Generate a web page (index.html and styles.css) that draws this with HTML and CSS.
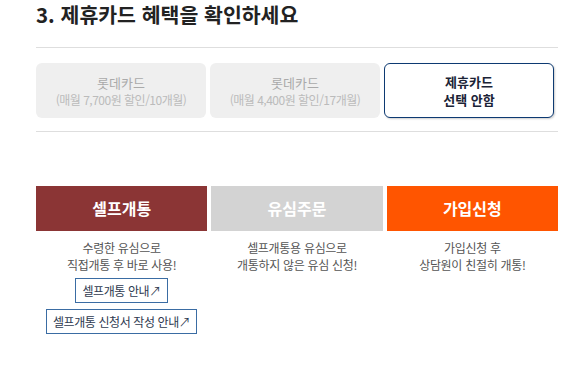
FILE: index.html
```html
<!DOCTYPE html>
<html lang="ko">
<head>
	<meta charset="UTF-8">
	<title>제휴카드</title>
	<link rel="stylesheet" href="styles.css">
</head>
<body>
	<div id="wrap">
		<h3 class="sec-title">3. 제휴카드 혜택을 확인하세요</h3>
		<div class="card-list">
			<div class="card-cell">
				<div class="card">
					<p class="card-name">롯데카드</p>
					<p class="card-desc">(매월 7,700원 할인/10개월)</p>
				</div>
			</div>
			<div class="card-cell">
				<div class="card">
					<p class="card-name">롯데카드</p>
					<p class="card-desc">(매월 4,400원 할인/17개월)</p>
				</div>
			</div>
			<div class="card-cell">
				<div class="card on">
					<p class="card-name">제휴카드</p>
					<p class="card-name">선택 안함</p>
				</div>
			</div>
		</div>
		<div class="join-list">
			<div class="join-col">
				<div class="join-btn self">셀프개통</div>
				<p class="join-txt">수령한 유심으로<br>직접개통 후 바로 사용!</p>
				<a class="guide-link" href="#">셀프개통 안내↗</a>
				<a class="guide-link" href="#">셀프개통 신청서 작성 안내↗</a>
			</div>
			<div class="join-col">
				<div class="join-btn usim">유심주문</div>
				<p class="join-txt">셀프개통용 유심으로<br>개통하지 않은 유심 신청!</p>
			</div>
			<div class="join-col">
				<div class="join-btn apply">가입신청</div>
				<p class="join-txt">가입신청 후<br>상담원이 친절히 개통!</p>
			</div>
		</div>
	</div>
</body>
</html>
```

FILE: styles.css
```css
body {
	margin: 0;
	background-color: #fff;
	font-family: "Noto Sans CJK KR", "Noto Sans", sans-serif;
	color: #333;
}
p {
	margin: 0;
}
#wrap {
	width: 522px;
	margin-left: 36px;
}
.sec-title {
	margin: 0;
	height: 47px;
	font-size: 20.5px;
	line-height: 28px;
	font-weight: bold;
	color: #222;
	border-bottom: 1px solid #dedede;
}
.card-list {
	display: flex;
	padding: 15px 0 13px 0;
	border-bottom: 1px solid #dedede;
}
.card-cell {
	flex: 1;
	padding-right: 4px;
}
.card {
	height: 55px;
	box-sizing: border-box;
	display: flex;
	flex-direction: column;
	justify-content: center;
	text-align: center;
	border-radius: 6px;
	background-color: #efefef;
	line-height: 17px;
}
.card-name {
	font-size: 13px;
	color: #aaa;
}
.card-desc {
	font-size: 12px;
	color: #bbb;
	letter-spacing: -0.5px;
}
.card.on {
	background-color: #fff;
	border: 1px solid #0d3a72;
	box-shadow: 1px 1px 2px rgba(0, 0, 0, 0.2);
	line-height: 18px;
}
.card.on .card-name {
	font-weight: bold;
	color: #1b2336;
}
.join-list {
	display: flex;
	gap: 4px;
	margin-top: 54px;
}
.join-col {
	flex: 1;
	display: flex;
	flex-direction: column;
	align-items: center;
}
.join-btn {
	align-self: stretch;
	height: 45px;
	line-height: 45px;
	text-align: center;
	font-size: 16px;
	font-weight: bold;
	color: #fff;
}
.join-btn.self {
	background-color: #8b3535;
}
.join-btn.usim {
	background-color: #d3d3d3;
}
.join-btn.apply {
	background-color: #ff5500;
}
.join-txt {
	margin-top: 8px;
	font-size: 12px;
	line-height: 17px;
	text-align: center;
	color: #555;
	letter-spacing: -0.3px;
}
.guide-link {
	display: block;
	margin-top: 5px;
	padding: 0 6px;
	height: 23px;
	line-height: 23px;
	font-size: 12px;
	color: #2e3a50;
	text-decoration: none;
	border: 1px solid #3a6ca3;
	letter-spacing: -0.4px;
}
.guide-link + .guide-link {
	margin-top: 6px;
}
```
